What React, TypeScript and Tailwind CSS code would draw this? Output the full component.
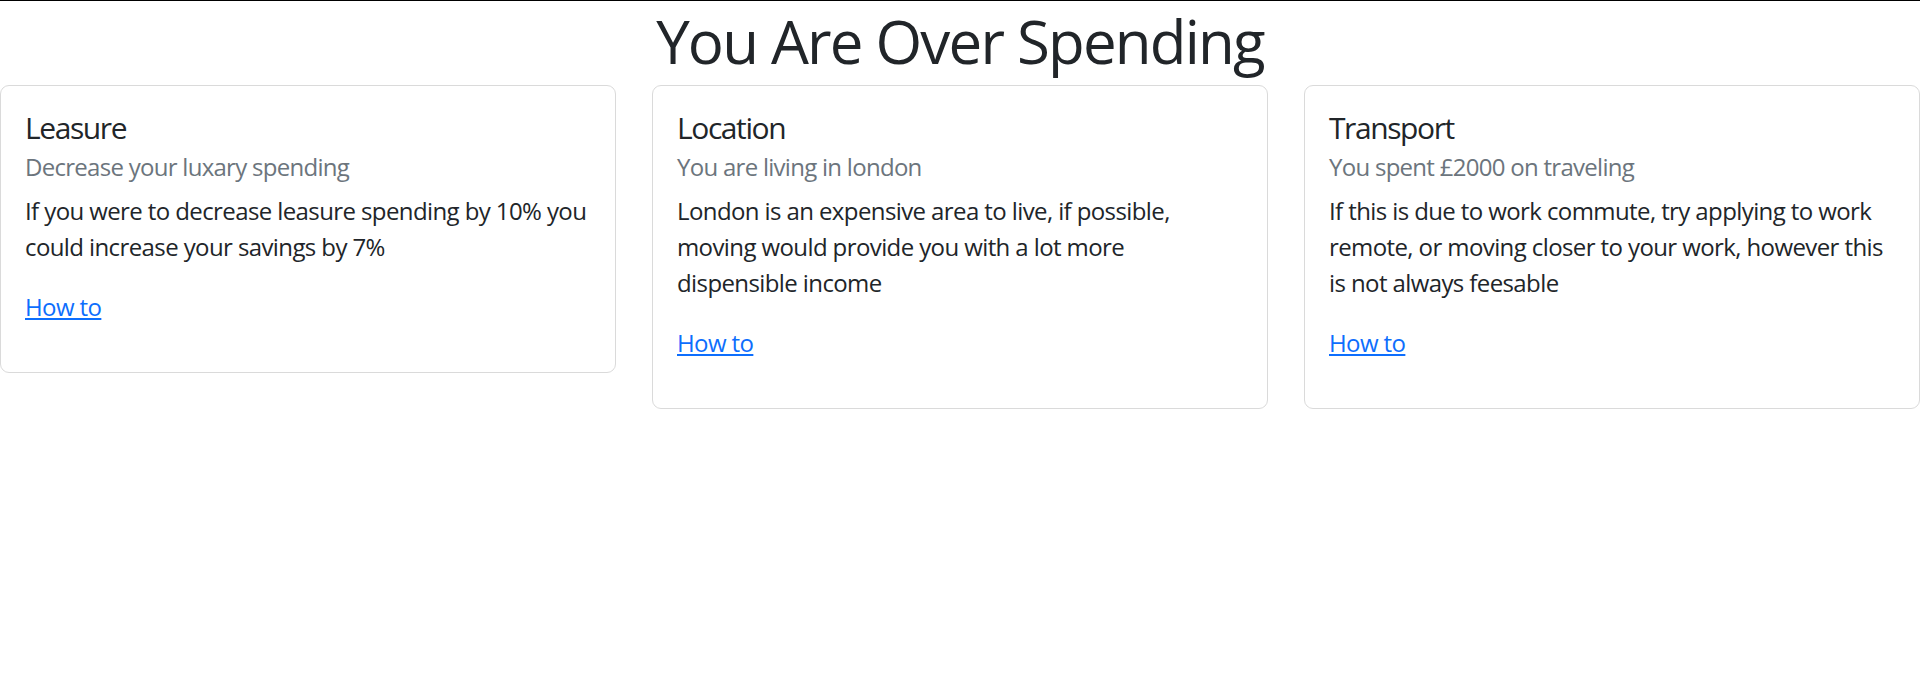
import React from "react";

type Card = {
  title: string;
  subtitle: string;
  lines: string[];
};

const cards: Card[] = [
  {
    title: "Leasure",
    subtitle: "Decrease your luxary spending",
    lines: [
      "If you were to decrease leasure spending by 10% you",
      "could increase your savings by 7%",
    ],
  },
  {
    title: "Location",
    subtitle: "You are living in london",
    lines: [
      "London is an expensive area to live, if possible,",
      "moving would provide you with a lot more",
      "dispensible income",
    ],
  },
  {
    title: "Transport",
    subtitle: "You spent £2000 on traveling",
    lines: [
      "If this is due to work commute, try applying to work",
      "remote, or moving closer to your work, however this",
      "is not always feesable",
    ],
  },
];

export default function App() {
  return (
    <div className="bg-white border-t border-black text-[#212529] font-['Open_Sans',sans-serif]">
      <h1 className="text-center text-[60px] leading-[80px] font-normal tracking-[-0.03em] mb-[4px]">
        You Are Over Spending
      </h1>
      <div className="grid grid-cols-3 gap-x-[36px] items-start">
        {cards.map((c) => (
          <div
            key={c.title}
            className="border border-[#dadada] rounded-[9px] px-[24px] pt-[24px] pb-[25px] bg-white"
          >
            <h5 className="text-[30px] leading-[36px] font-normal tracking-[-0.047em] mb-[12px]">
              {c.title}
            </h5>
            <h6 className="text-[24px] leading-[29px] font-normal tracking-[-0.03em] text-[#6c757d] -mt-[6px] mb-[12px]">
              {c.subtitle}
            </h6>
            <p className="text-[24px] leading-[36px] tracking-[-0.025em] mb-[24px] whitespace-nowrap">
              {c.lines.map((l, i) => (
                <React.Fragment key={i}>
                  {l}
                  {i < c.lines.length - 1 && <br />}
                </React.Fragment>
              ))}
            </p>
            <p className="text-[24px] leading-[36px] tracking-[-0.025em] mb-[22px]">
              <a href="#" className="text-[#0d6efd] underline">
                How to
              </a>
            </p>
          </div>
        ))}
      </div>
    </div>
  );
}
